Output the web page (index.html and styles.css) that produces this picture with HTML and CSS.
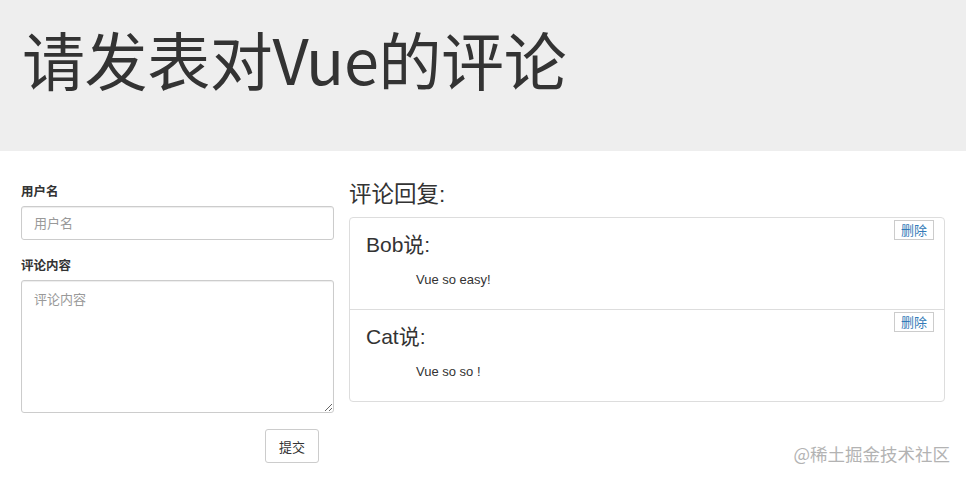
FILE: index.html
```html
<!DOCTYPE html>
<html lang="zh-CN">
<head>
<meta charset="utf-8">
<title>请发表对Vue的评论</title>
<link rel="stylesheet" href="styles.css">
</head>
<body>
<div class="jumbotron">
  <h1 class="title">请发表对Vue的评论</h1>
</div>
<div class="main">
  <form class="form-col">
    <div class="form-group">
      <label class="label">用户名</label>
      <input class="control" type="text" placeholder="用户名">
    </div>
    <div class="form-group">
      <label class="label">评论内容</label>
      <textarea class="control area" placeholder="评论内容"></textarea>
    </div>
    <div class="actions">
      <button type="button" class="btn">提交</button>
    </div>
  </form>
  <div class="list-col">
    <h3 class="list-title">评论回复:</h3>
    <ul class="list-group">
      <li class="list-item">
        <button type="button" class="del">删除</button>
        <h4 class="who">Bob说:</h4>
        <p class="said">Vue so easy!</p>
      </li>
      <li class="list-item">
        <button type="button" class="del">删除</button>
        <h4 class="who">Cat说:</h4>
        <p class="said">Vue so so !</p>
      </li>
    </ul>
  </div>
</div>
<div class="watermark">@稀土掘金技术社区</div>
</body>
</html>
```

FILE: styles.css
```css
* { box-sizing: border-box; }
html, body { margin: 0; padding: 0; }
body {
  width: 966px;
  height: 480px;
  position: relative;
  overflow: hidden;
  background: #fff;
  color: #333;
  font-family: "Liberation Sans", "Noto Sans CJK SC", sans-serif;
  font-size: 13px;
}
.jumbotron {
  background: #eeeeee;
  height: 151px;
  padding: 21px 22px 0;
}
.title {
  margin: 0;
  font-family: "Noto Sans CJK SC", sans-serif;
  font-weight: 400;
  font-size: 63px;
  line-height: 74px;
  color: #333;
  letter-spacing: -0.4px;
}
.main {
  display: flex;
  gap: 15px;
  padding: 0 21px;
}
.form-col {
  width: 313px;
  flex: none;
  margin: 0;
  padding-top: 32px;
}
.form-group { margin-bottom: 17px; }
.label {
  display: block;
  font-weight: 700;
  font-size: 12.5px;
  line-height: 18px;
  margin-bottom: 5px;
  color: #333;
}
.control {
  display: block;
  width: 100%;
  height: 34px;
  border: 1px solid #ccc;
  border-radius: 3px;
  padding: 6px 12px;
  font-family: "Liberation Sans", "Noto Sans CJK SC", sans-serif;
  font-size: 13px;
  color: #555;
  background: #fff;
  box-shadow: inset 0 1px 1px rgba(0,0,0,.075);
}
.control::placeholder { color: #999; }
.area {
  height: 133px;
  padding-top: 8px;
  resize: vertical;
}
.form-group + .form-group { margin-bottom: 16px; }
.actions {
  display: flex;
  justify-content: flex-end;
  padding-right: 15px;
}
.btn {
  width: 54px;
  height: 34px;
  border: 1px solid #ccc;
  border-radius: 3px;
  background: #fff;
  color: #333;
  font-family: "Liberation Sans", "Noto Sans CJK SC", sans-serif;
  font-size: 13px;
  padding: 0;
}
.list-col {
  flex: 1;
  padding-top: 29px;
}
.list-title {
  margin: 0 0 7px;
  font-weight: 400;
  font-size: 22.5px;
  line-height: 30px;
  color: #333;
}
.list-group {
  list-style: none;
  margin: 0;
  padding: 0;
  border: 1px solid #ddd;
  border-radius: 4px;
}
.list-item {
  position: relative;
  height: 92px;
  padding: 14px 16px 0;
}
.list-item + .list-item { border-top: 1px solid #ddd; }
.list-item:first-child { height: 91px; }
.who {
  margin: 0;
  font-weight: 400;
  font-size: 21px;
  line-height: 26px;
  color: #333;
}
.said {
  margin: 13px 0 0 50px;
  font-size: 13px;
  line-height: 18px;
  color: #333;
}
.del {
  position: absolute;
  top: 2px;
  right: 10px;
  width: 40px;
  height: 20px;
  padding: 0;
  border: 1px solid #ccc;
  border-radius: 0;
  background: #fff;
  color: #337ab7;
  font-family: "Noto Sans CJK SC", sans-serif;
  font-size: 13px;
  line-height: 18px;
}
.watermark {
  position: absolute;
  right: 16px;
  bottom: 14px;
  font-family: "Noto Sans CJK SC", sans-serif;
  font-size: 17.5px;
  line-height: 24px;
  color: #b3b3b3;
}
```
